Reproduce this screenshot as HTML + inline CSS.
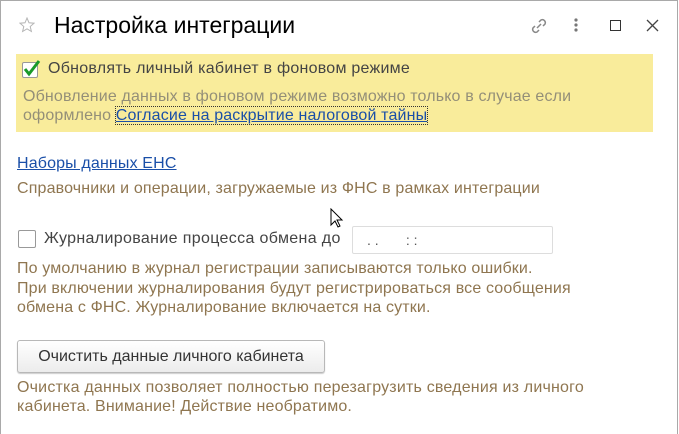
<!DOCTYPE html>
<html><head><meta charset="utf-8"><style>
*{margin:0;padding:0;box-sizing:border-box}
body{width:679px;height:434px;background:#fff;font-family:"Liberation Sans",Arial,sans-serif;position:relative;overflow:hidden}
.win{position:absolute;left:0;top:0;width:678px;height:434px;border:1px solid #a9a9a9;border-bottom:none}
.a{position:absolute;white-space:nowrap}
.t{font-size:16px;letter-spacing:0.15px}
.g{color:#948f78}
.b{color:#8f7650}
.lnk{color:#1a4fa8;text-decoration:underline}
</style></head><body>
<div class="win"></div>
<svg class="a" style="left:19px;top:17px" width="16" height="16" viewBox="0 0 16 16"><path d="M8 1l2 4.8 5 .4-3.8 3.3 1.2 5L8 11.8 3.6 14.5l1.2-5L1 6.2l5-.4z" fill="none" stroke="#b5b5b5" stroke-width="1"/></svg>
<div class="a" style="left:54px;top:12px;font-size:23px;color:#000">Настройка интеграции</div>
<svg class="a" style="left:528px;top:15px" width="22" height="22" viewBox="0 0 22 22"><g fill="none" stroke="#888" stroke-width="1.5"><path d="M9 13l4-4"/><path d="M11 7l2-2a3 3 0 0 1 4 4l-2 2"/><path d="M11 15l-2 2a3 3 0 0 1-4-4l2-2"/></g></svg>
<svg class="a" style="left:573px;top:17px" width="6" height="16"><circle cx="3" cy="3" r="1.6" fill="#777"/><circle cx="3" cy="8" r="1.6" fill="#777"/><circle cx="3" cy="13" r="1.6" fill="#777"/></svg>
<div class="a" style="left:610px;top:20px;width:11px;height:11px;border:1.3px solid #333"></div>
<svg class="a" style="left:646px;top:19px" width="13" height="13"><path d="M1 1l11 11M12 1L1 12" stroke="#444" stroke-width="1.3"/></svg>
<div class="a" style="left:16px;top:54px;width:637px;height:78px;background:#f9ec9b"></div>
<div class="a" style="left:22px;top:62px;width:16px;height:16px;border:1px solid #999;background:#fff;border-radius:2px"></div>
<svg class="a" style="left:23px;top:59px" width="18" height="18"><path d="M2 10l4 5L16 2" fill="none" stroke="#1a9a2a" stroke-width="3"/></svg>
<div class="a t" style="left:48px;top:60px;color:#444;letter-spacing:0.25px">Обновлять личный кабинет в фоновом режиме</div>
<div class="a t g" style="left:23px;top:88px">Обновление данных в фоновом режиме возможно только в случае если</div>
<div class="a t g" style="left:23px;top:107px">оформлено <span class="lnk" style="outline:1px dotted #333">Согласие на раскрытие налоговой тайны</span></div>
<div class="a t lnk" style="left:17px;top:155px">Наборы данных ЕНС</div>
<div class="a t b" style="left:17px;top:180px">Справочники и операции, загружаемые из ФНС в рамках интеграции</div>
<svg class="a" style="left:330px;top:208px" width="14" height="22"><path d="M1 1v16l4-4 3 6 2-1-3-6h5z" fill="#fff" stroke="#000" stroke-width="1"/></svg>
<div class="a" style="left:18px;top:230px;width:18px;height:18px;border:1px solid #999;border-radius:2px;background:#fff"></div>
<div class="a t" style="left:44px;top:230px;color:#444;letter-spacing:0.35px">Журналирование процесса обмена до</div>
<div class="a" style="left:352px;top:226px;width:201px;height:28px;border:1px solid #ddd;border-radius:2px;font-size:14px;color:#555;padding:5px 0 0 14px">. .&nbsp;&nbsp;&nbsp;&nbsp;&nbsp;&nbsp;&nbsp;: :</div>
<div class="a t b" style="left:17px;top:260px">По умолчанию в журнал регистрации записываются только ошибки.</div>
<div class="a t b" style="left:17px;top:280px">При включении журналирования будут регистрироваться все сообщения</div>
<div class="a t b" style="left:17px;top:299px">обмена с ФНС. Журналирование включается на сутки.</div>
<div class="a" style="left:17px;top:340px;width:308px;height:33px;border:1px solid #b8b8b8;border-radius:3px;background:linear-gradient(#fff,#ececec);box-shadow:0 1px 1px #ccc;font-size:16px;color:#333;text-align:center;line-height:31px">Очистить данные личного кабинета</div>
<div class="a t b" style="left:17px;top:379px;letter-spacing:0.2px">Очистка данных позволяет полностью перезагрузить сведения из личного</div>
<div class="a t b" style="left:17px;top:398px">кабинета. Внимание! Действие необратимо.</div>
</body></html>
